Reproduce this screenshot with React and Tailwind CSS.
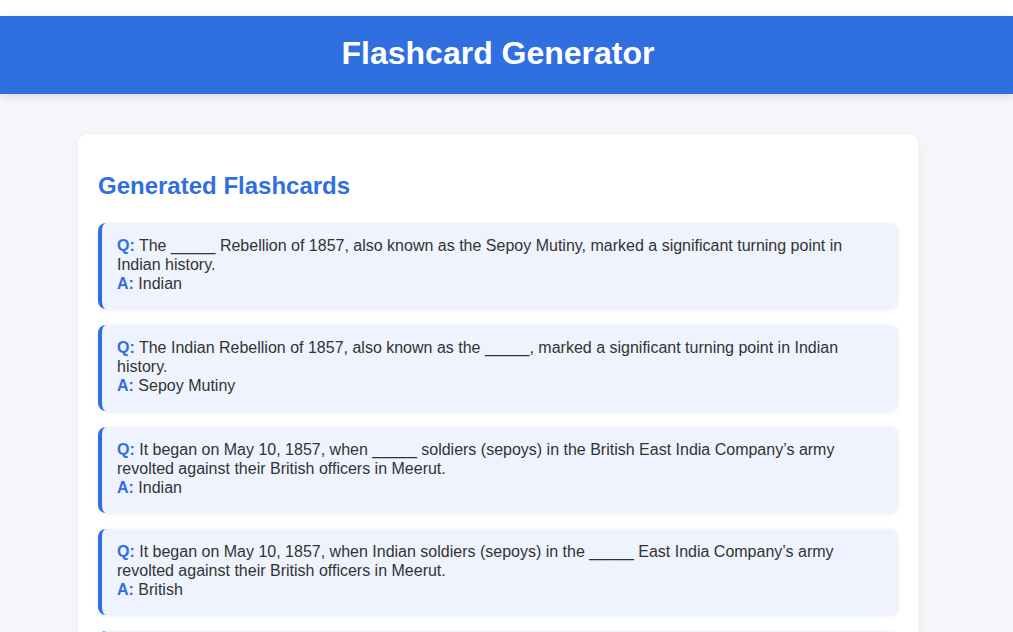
import React from "react";

const cards = [
  {
    q: "The _____ Rebellion of 1857, also known as the Sepoy Mutiny, marked a significant turning point in Indian history.",
    a: "Indian",
  },
  {
    q: "The Indian Rebellion of 1857, also known as the _____, marked a significant turning point in Indian history.",
    a: "Sepoy Mutiny",
  },
  {
    q: "It began on May 10, 1857, when _____ soldiers (sepoys) in the British East India Company\u2019s army revolted against their British officers in Meerut.",
    a: "Indian",
  },
  {
    q: "It began on May 10, 1857, when Indian soldiers (sepoys) in the _____ East India Company\u2019s army revolted against their British officers in Meerut.",
    a: "British",
  },
  {
    q: "It began on May 10, 1857, when Indian soldiers (sepoys) in the British East India Company\u2019s army revolted against their _____ officers in Meerut.",
    a: "British",
  },
];

const Flashcard = ({ q, a }) => (
  <div className="bg-[#eef3fe] border-l-4 border-[#2f6fdf] rounded-lg px-[15px] pt-[13px] pb-4 shadow-[0_1px_4px_rgba(0,0,0,0.08)]">
    <p className="text-[#333] text-base leading-[19px]">
      <span className="font-bold text-[#2f6fdf]">Q:</span> {q}
    </p>
    <p className="text-[#333] text-base leading-[19px]">
      <span className="font-bold text-[#2f6fdf]">A:</span> {a}
    </p>
  </div>
);

const App = () => {
  return (
    <div className="min-h-screen bg-[#f4f6fa] font-['Liberation_Sans',Arial,sans-serif]">
      <div className="h-4 bg-white" />
      {/* page was laid out beside a 17px scrollbar gutter */}
      <header className="bg-[#2f6fdf] h-[78px] pr-[17px] pb-[5px] flex items-center justify-center shadow-[0_2px_8px_rgba(0,0,0,0.12)] relative">
        <h1 className="text-white text-[32px] font-bold">Flashcard Generator</h1>
      </header>

      <main className="flex justify-center pt-10 pb-10 pr-[17px]">
        <div className="w-[840px] bg-white rounded-[10px] px-5 pt-[38px] pb-5 shadow-[0_2px_10px_rgba(0,0,0,0.04)]">
          <h2 className="text-[#2f6fdf] text-2xl font-bold leading-7 mb-[23px]">
            Generated Flashcards
          </h2>
          <div className="flex flex-col gap-4">
            {cards.map((c, i) => (
              <Flashcard key={i} q={c.q} a={c.a} />
            ))}
          </div>
        </div>
      </main>
    </div>
  );
};

export default App;
